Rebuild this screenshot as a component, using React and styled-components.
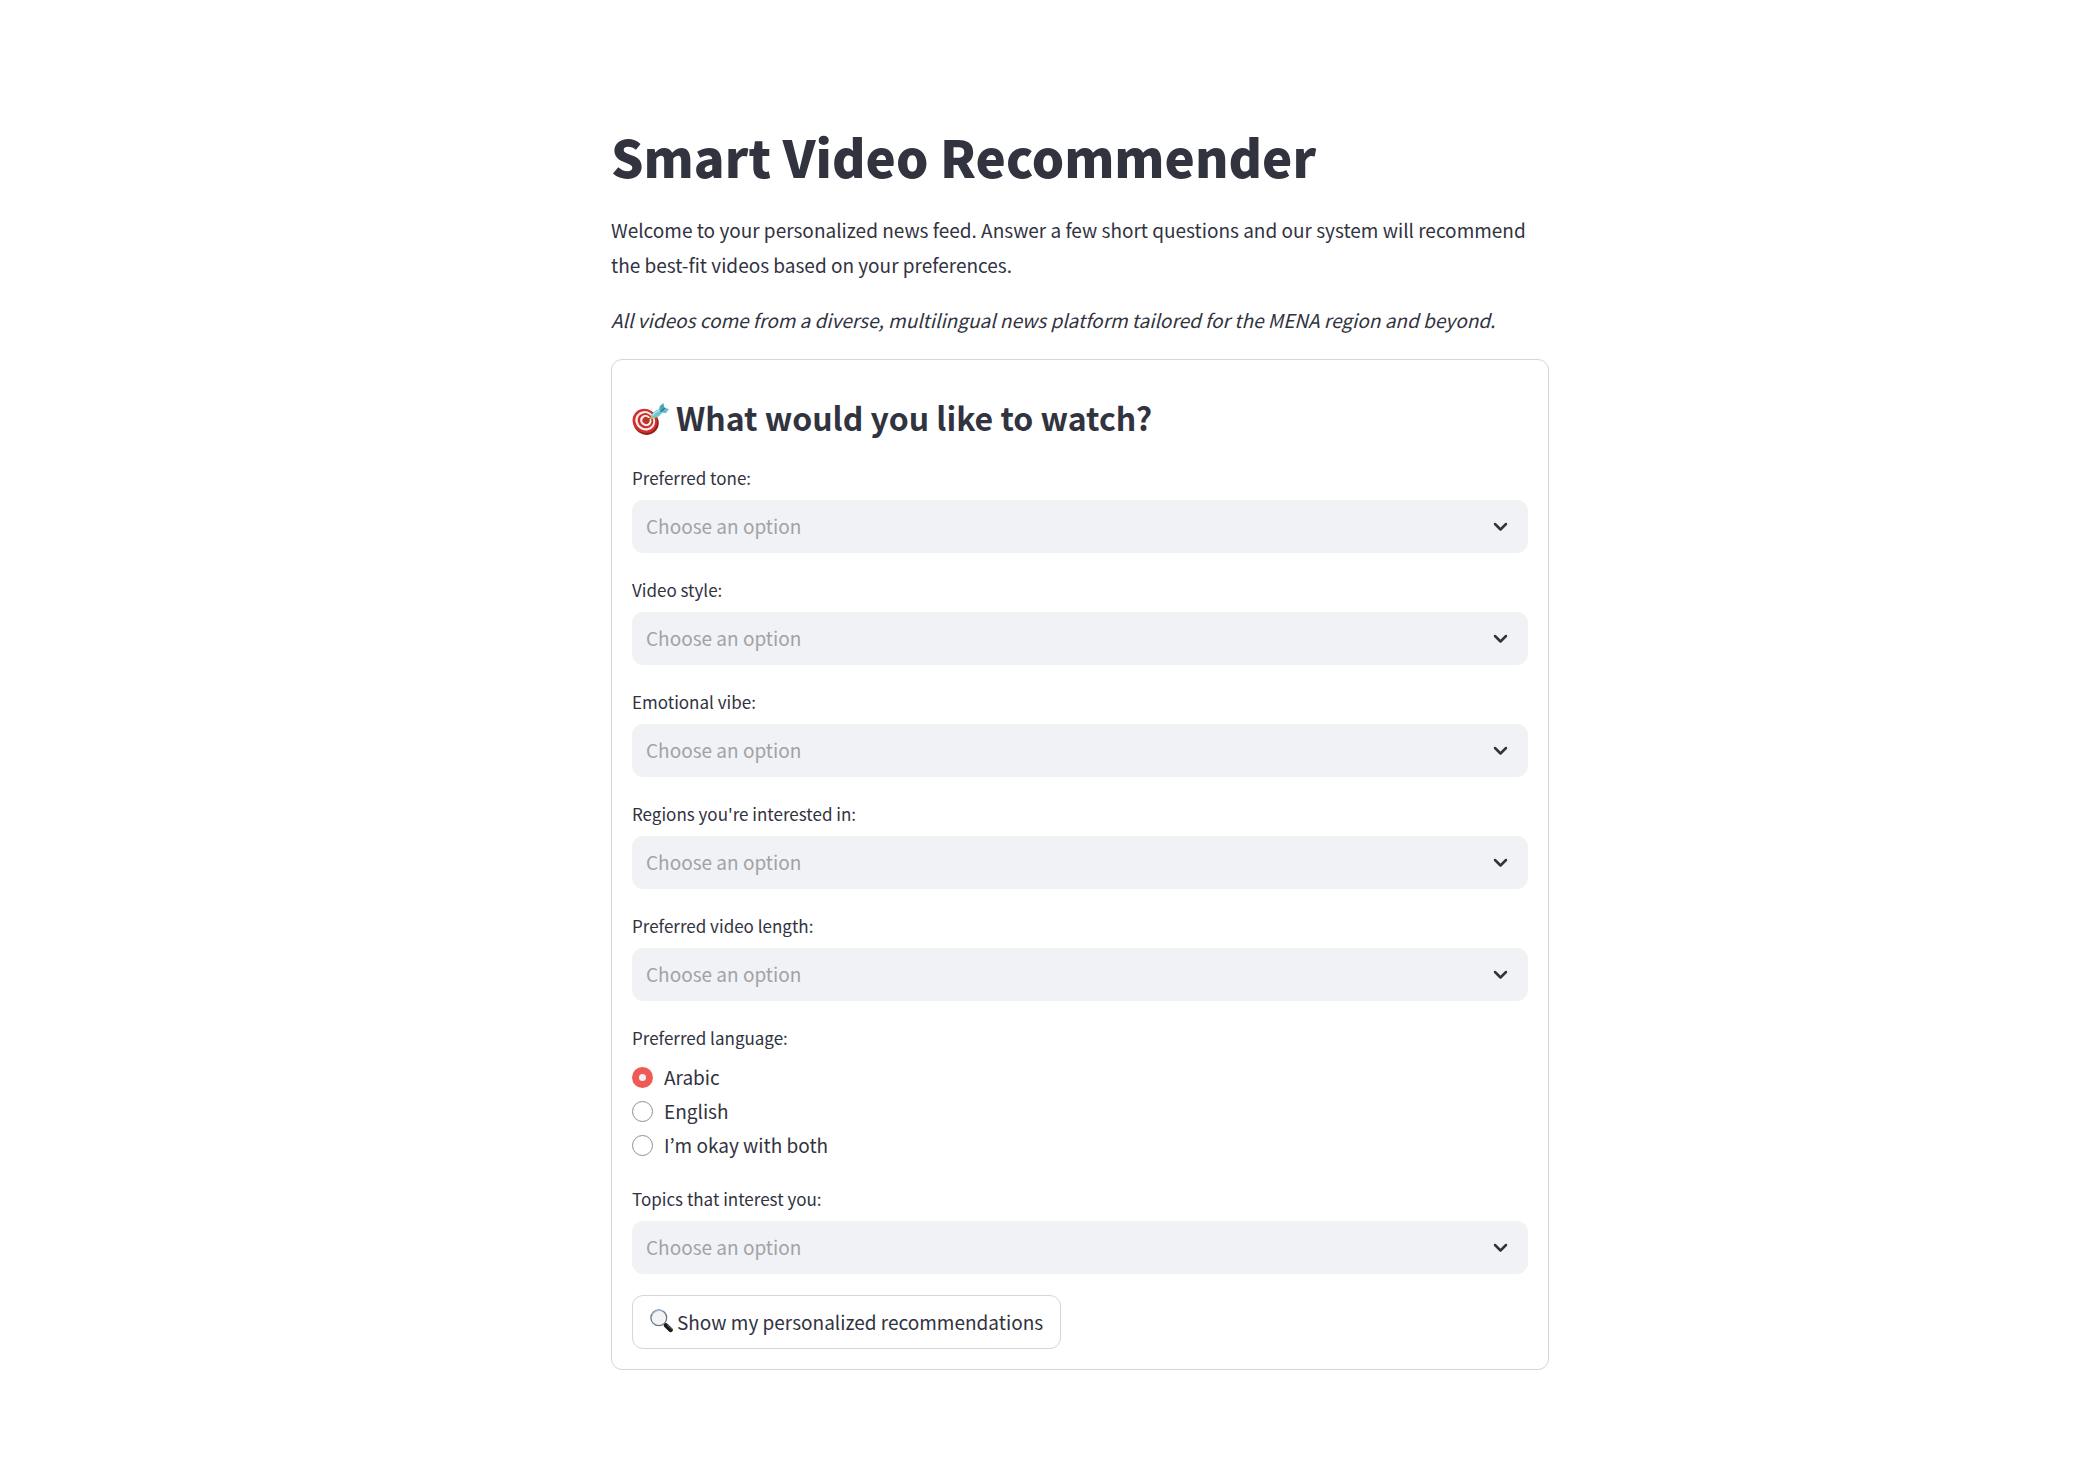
import React, { useState } from "react";
import styled, { createGlobalStyle } from "styled-components";

const ink = "#31333f";
const line = "#d5d6d9";
const field = "#f0f2f6";

const GlobalStyle = createGlobalStyle`
  *, *::before, *::after { box-sizing: border-box; }
  body {
    margin: 0;
    background: #fff;
    color: ${ink};
    font-family: "Source Sans Pro", "Noto Sans CJK KR", "Noto Sans", sans-serif;
    font-size: 19px;
    line-height: 35px;
  }
`;

const Page = styled.main`
  padding: 124px 0 106px 86px;
`;

const Column = styled.div`
  max-width: 938px;
  margin: 0 auto;
`;

const Title = styled.h1`
  margin: 0 0 23px;
  font-size: 51px;
  font-weight: 900;
  line-height: 65px;
`;

const Text = styled.p`
  margin: 0 0 20px;
`;

const Form = styled.form`
  display: flex;
  flex-direction: column;
  gap: 21px;
  margin-top: 22px;
  padding: 20px;
  border: 1px solid ${line};
  border-radius: 11px;
`;

const Heading = styled.h2`
  display: flex;
  align-items: center;
  gap: 7px;
  margin: 0;
  padding: 15px 0 1px;
  font-size: 32px;
  font-weight: 700;
  line-height: 45px;
`;

const Field = styled.div`
  display: flex;
  flex-direction: column;
`;

const Group = styled.fieldset`
  margin: 0;
  padding: 0;
  border: 0;
  min-width: 0;
`;

const Label = styled.label`
  display: block;
  padding: 0 0 7px;
  font-size: 17px;
  line-height: 31px;
`;

const SelectWrap = styled.div`
  position: relative;
`;

const Select = styled.select`
  appearance: none;
  display: block;
  width: 100%;
  height: 53px;
  padding: 0 48px 2px 14px;
  border: 0;
  border-radius: 11px;
  background: ${field};
  color: ${(p) => (p.$empty ? "#a1a2a8" : ink)};
  font: inherit;
`;

const Arrow = styled.svg`
  position: absolute;
  top: 16px;
  right: 17px;
  pointer-events: none;
`;

const Choice = styled.label`
  display: flex;
  align-items: center;
  gap: 11px;
  width: fit-content;
  line-height: 34px;
`;

const Radio = styled.input`
  appearance: none;
  width: 21px;
  height: 21px;
  margin: 0;
  border: 1px solid #8e9096;
  border-radius: 50%;
  background: #fff;

  &:checked {
    border: 7px solid #f05a55;
    background: ${field};
  }
`;

const Submit = styled.button`
  display: flex;
  align-items: center;
  align-self: flex-start;
  gap: 4px;
  height: 54px;
  padding: 0 17px 2px;
  border: 1px solid ${line};
  border-radius: 11px;
  background: #fff;
  color: ${ink};
  font: inherit;
`;

const OPTIONS = {
  tone: ["Serious", "Light", "Inspiring"],
  style: ["Report", "Interview", "Documentary"],
  vibe: ["Hopeful", "Calm", "Exciting"],
  regions: ["Levant", "Gulf", "North Africa"],
  length: ["Short", "Medium", "Long"],
  topics: ["Politics", "Culture", "Technology"],
};

function Picker({ id, label }) {
  const [value, setValue] = useState("");
  return (
    <Field>
      <Label htmlFor={id}>{label}</Label>
      <SelectWrap>
        <Select id={id} value={value} $empty={!value} onChange={(e) => setValue(e.target.value)}>
          <option value="">Choose an option</option>
          {OPTIONS[id].map((o) => (
            <option key={o}>{o}</option>
          ))}
        </Select>
        <Arrow width="21" height="21" viewBox="0 0 21 21" aria-hidden="true">
          <path d="M5 8 L10.5 13.5 L16 8" fill="none" stroke={ink} strokeWidth="2.5" strokeLinecap="round" strokeLinejoin="round" />
        </Arrow>
      </SelectWrap>
    </Field>
  );
}

function TargetIcon() {
  return (
    <svg width="37" height="37" viewBox="0 -4 37 37" aria-hidden="true">
      <ellipse cx="14" cy="19.4" rx="13" ry="12.2" transform="rotate(35 14 19.4)" fill="#8f1f1c" />
      <ellipse cx="12.9" cy="17.9" rx="12.6" ry="11.8" transform="rotate(35 12.9 17.9)" fill="#d3302b" />
      <ellipse cx="13.2" cy="17.8" rx="10.2" ry="9.4" transform="rotate(35 13.2 17.8)" fill="#f7efee" />
      <ellipse cx="13.5" cy="17.7" rx="8" ry="7.4" transform="rotate(35 13.5 17.7)" fill="#c92f2b" />
      <ellipse cx="13.8" cy="17.6" rx="5.9" ry="5.4" transform="rotate(35 13.8 17.6)" fill="#f7efee" />
      <ellipse cx="14" cy="17.5" rx="3.7" ry="3.4" transform="rotate(35 14 17.5)" fill="#c92f2b" />
      <path d="M14.5 17.5 L20 14" stroke="#7c4a22" strokeWidth="1.2" />
      <path d="M17.6 16 L20 11.4 L23.4 15 Z" fill="#e8b32c" />
      <path d="M19.2 12.6 C21.4 8.4 25 6.6 29.6 5.6 L31.4 8 C28.8 12.6 25.4 14.8 21.6 15 Z" fill="#6cc9d4" />
      <path d="M20.6 12.4 C22.8 9.6 25.5 8 29 6.8" fill="none" stroke="#b8ecf0" strokeWidth="1.2" />
      <path d="M27 7.4 L27.8 3 L31.4 0 L32.4 5.2 Z" fill="#48a9b8" />
      <path d="M29 9.2 L32.2 4.8 L37 6 L33.8 10.2 Z" fill="#62c0cc" />
      <path d="M27.8 8 L32.6 4.2 L33.6 5.4 L29.4 9.2 Z" fill="#307f8c" />
    </svg>
  );
}

function MagnifierIcon() {
  return (
    <svg width="23" height="24" viewBox="0 0 23 24" aria-hidden="true">
      <path d="M13.8 14 L17 17" stroke="#6f7479" strokeWidth="2" />
      <path d="M16 16.4 L20.6 20.9" stroke="#17191b" strokeWidth="4.4" strokeLinecap="round" />
      <path d="M17.2 15.8 L21.6 20" stroke="#7f868b" strokeWidth="0.9" strokeLinecap="round" />
      <circle cx="8.8" cy="8.8" r="7.9" fill="#f3f4f5" stroke="#6e7780" strokeWidth="1.3" />
      <path d="M2 6.6 A7.2 7.2 0 0 1 13 2.8" fill="none" stroke="#a4bad2" strokeWidth="1.2" />
    </svg>
  );
}

const LANGUAGES = ["Arabic", "English", "I’m okay with both"];

export default function App() {
  const [language, setLanguage] = useState("Arabic");
  return (
    <>
      <GlobalStyle />
      <Page>
        <Column>
          <Title>Smart Video Recommender</Title>
          <Text>
            Welcome to your personalized news feed. Answer a few short questions and our system will
            recommend the best-fit videos based on your preferences.
          </Text>
          <Text>
            <em>All videos come from a diverse, multilingual news platform tailored for the MENA region and beyond.</em>
          </Text>
          <Form onSubmit={(e) => e.preventDefault()}>
            <Heading>
              <TargetIcon />
              What would you like to watch?
            </Heading>
            <Picker id="tone" label="Preferred tone:" />
            <Picker id="style" label="Video style:" />
            <Picker id="vibe" label="Emotional vibe:" />
            <Picker id="regions" label="Regions you're interested in:" />
            <Picker id="length" label="Preferred video length:" />
            <Group>
              <Label as="legend">Preferred language:</Label>
              {LANGUAGES.map((name) => (
                <Choice key={name}>
                  <Radio
                    type="radio"
                    name="language"
                    value={name}
                    checked={language === name}
                    onChange={() => setLanguage(name)}
                  />
                  {name}
                </Choice>
              ))}
            </Group>
            <Picker id="topics" label="Topics that interest you:" />
            <Submit type="submit">
              <MagnifierIcon />
              Show my personalized recommendations
            </Submit>
          </Form>
        </Column>
      </Page>
    </>
  );
}
